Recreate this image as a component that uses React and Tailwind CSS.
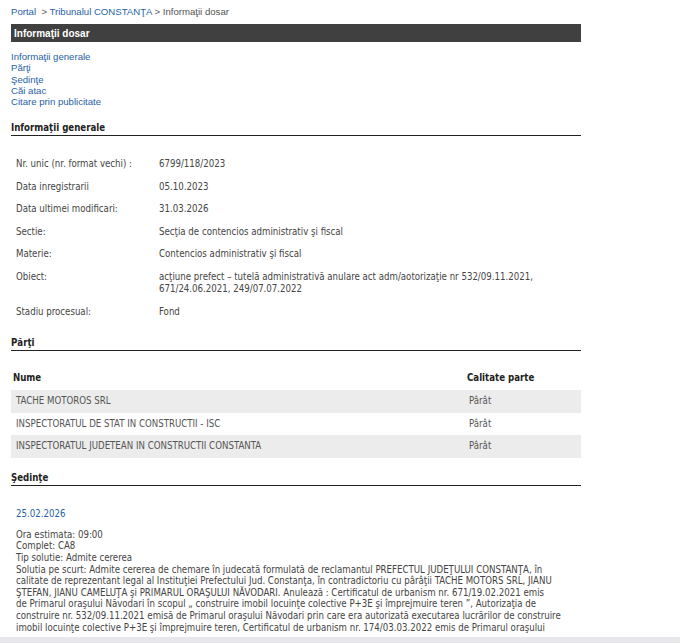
export default function App() {
    const tahoma = {
        fontFamily: '"DejaVu Sans Condensed", "DejaVu Sans", sans-serif',
    };

    const info = [
        ["Nr. unic (nr. format vechi) :", ["6799/118/2023"]],
        ["Data inregistrarii", ["05.10.2023"]],
        ["Data ultimei modificari:", ["31.03.2026"]],
        ["Sectie:", ["Secţia de contencios administrativ şi fiscal"]],
        ["Materie:", ["Contencios administrativ şi fiscal"]],
        [
            "Obiect:",
            [
                "acţiune prefect – tutelă administrativă anulare act adm/aotorizaţie nr 532/09.11.2021,",
                "671/24.06.2021, 249/07.07.2022",
            ],
        ],
        ["Stadiu procesual:", ["Fond"]],
    ];

    const parti = [
        ["TACHE MOTOROS SRL", "Pârât"],
        ["INSPECTORATUL DE STAT IN CONSTRUCTII - ISC", "Pârât"],
        ["INSPECTORATUL JUDETEAN IN CONSTRUCTII CONSTANTA", "Pârât"],
    ];

    const solutie = [
        "Ora estimata: 09:00",
        "Complet: CA8",
        "Tip solutie: Admite cererea",
        "Solutia pe scurt: Admite cererea de chemare în judecată formulată de reclamantul PREFECTUL JUDEŢULUI CONSTANŢA, în",
        "calitate de reprezentant legal al Instituţiei Prefectului Jud. Constanţa, în contradictoriu cu pârâţii TACHE MOTORS SRL, JIANU",
        "ŞTEFAN, JIANU CAMELUŢA şi PRIMARUL ORAŞULUI NĂVODARI. Anulează : Certificatul de urbanism nr. 671/19.02.2021 emis",
        "de Primarul oraşului Năvodari în scopul „ construire imobil locuinţe colective P+3E şi împrejmuire teren ”, Autorizaţia de",
        "construire nr. 532/09.11.2021 emisă de Primarul oraşului Năvodari prin care era autorizată executarea lucrărilor de construire",
        "imobil locuinţe colective P+3E şi împrejmuire teren, Certificatul de urbanism nr. 174/03.03.2022 emis de Primarul oraşului",
    ];

    return (
        <div className="h-[643px] overflow-hidden bg-white flex flex-col">
            <div
                className="flex-1 overflow-hidden pl-[11px] pt-[6px] w-[581px]"
                style={{ fontFamily: '"Liberation Sans", Arial, sans-serif' }}
            >
                {/* Breadcrumb */}
                <div className="text-[9.6px] leading-[12px] text-[#555]">
                    <span className="text-[#1f5fa6]">Portal</span>
                    <span> &nbsp;&gt; </span>
                    <span className="text-[#1f5fa6]">Tribunalul CONSTANŢA</span>
                    <span> &gt; Informaţii dosar</span>
                </div>

                {/* Title bar */}
                <div className="mt-[6px] h-[18px] bg-[#404040] pl-[3px] flex items-center text-white font-bold text-[10px]">
                    Informaţii dosar
                </div>

                {/* Anchors */}
                <div className="mt-[9px] flex flex-col text-[9.6px] leading-[11.25px] text-[#1f5fa6]">
                    <span>Informaţii generale</span>
                    <span>Părţi</span>
                    <span>Şedinţe</span>
                    <span>Căi atac</span>
                    <span>Citare prin publicitate</span>
                </div>

                <div style={tahoma} className="text-[9.6px] text-[#444]">
                    {/* Informatii generale */}
                    <div className="mt-[15px] pb-[1px] border-b border-[#222] font-bold text-[#222] leading-[12px]">
                        Informaţii generale
                    </div>
                    <div className="mt-[17px] flex flex-col">
                        {info.map(([label, value]) => (
                            <div key={label} className="flex py-[5px] leading-[12.5px]">
                                <div className="w-[148px] pl-[5px] shrink-0">{label}</div>
                                <div>
                                    {value.map((v) => (
                                        <div key={v} className="whitespace-nowrap">
                                            {v}
                                        </div>
                                    ))}
                                </div>
                            </div>
                        ))}
                    </div>

                    {/* Parti */}
                    <div className="mt-[14px] pb-[1px] border-b border-[#222] font-bold text-[#222] leading-[12px]">
                        Părţi
                    </div>
                    <div className="mt-[15px] flex flex-col">
                        <div className="flex h-[24px] items-center font-bold text-[#222]">
                            <div className="flex-1 pl-[2px]">Nume</div>
                            <div className="w-[114px]">Calitate parte</div>
                        </div>
                        {parti.map(([nume, calitate], i) => (
                            <div
                                key={nume}
                                className={`flex h-[22.5px] items-center text-[#555] ${
                                    i % 2 === 0 ? "bg-[#ececec]" : "bg-white"
                                }`}
                            >
                                <div className="flex-1 pl-[5px]">{nume}</div>
                                <div className="w-[112px]">{calitate}</div>
                            </div>
                        ))}
                    </div>

                    {/* Sedinte */}
                    <div className="mt-[14px] pb-[1px] border-b border-[#222] font-bold text-[#222] leading-[12px]">
                        Şedinţe
                    </div>
                    <div className="mt-[22px] pl-[5px]">
                        <div className="text-[#1f5fa6] leading-[12px]">25.02.2026</div>
                        <div className="mt-[9px] leading-[11.6px]">
                            {solutie.map((line) => (
                                <div key={line} className="whitespace-nowrap">
                                    {line}
                                </div>
                            ))}
                        </div>
                    </div>
                </div>
            </div>
            <div className="h-[6px] shrink-0 bg-[#e8e8ec]"></div>
        </div>
    );
}
